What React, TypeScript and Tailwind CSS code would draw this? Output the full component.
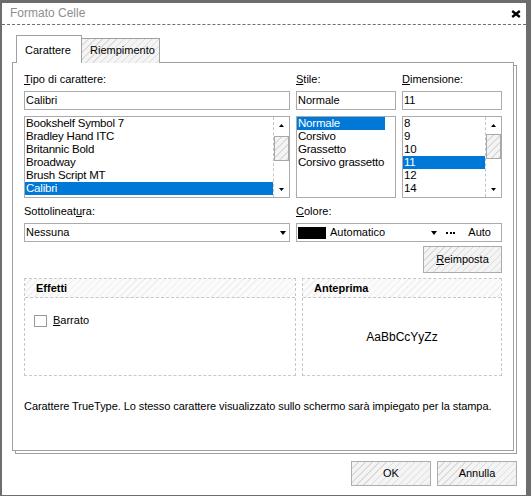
import React from 'react';

const FONTS = ['Bookshelf Symbol 7', 'Bradley Hand ITC', 'Britannic Bold', 'Broadway', 'Brush Script MT', 'Calibri'];
const STYLES = ['Normale', 'Corsivo', 'Grassetto', 'Corsivo grassetto'];
const SIZES = ['8', '9', '10', '11', '12', '14'];

const hatch = 'bg-[image:repeating-linear-gradient(135deg,#f4f4f4_0px,#f4f4f4_4px,#dcdcdc_4px,#dcdcdc_5px)]';
const hatchLight = 'bg-[image:repeating-linear-gradient(135deg,#fbfbfb_0px,#fbfbfb_4px,#efefef_4px,#efefef_5px)]';

function Tri({ down, w = 5, h = 3 }: { down?: boolean; w?: number; h?: number }) {
  return (
    <svg width={w} height={h} viewBox={`0 0 ${w} ${h}`} className="block">
      <polygon points={down ? `0,0 ${w},0 ${w / 2},${h}` : `0,${h} ${w},${h} ${w / 2},0`} fill="#000" />
    </svg>
  );
}

function Scrollbar({ thumbGap }: { thumbGap: string }) {
  return (
    <div className="w-[16px] h-full border-l border-dashed border-[#c4c4c4] flex flex-col">
      <div className="h-[16px] flex items-center justify-center">
        <Tri />
      </div>
      <div className={`${thumbGap} h-[25px] w-[15px] border border-[#a8a8a8] ${hatch}`} />
      <div className="flex-1" />
      <div className="h-[16px] flex items-center justify-center">
        <Tri down />
      </div>
    </div>
  );
}

function ListBox({ items, selected, right }: { items: string[]; selected: number; right: React.ReactNode }) {
  return (
    <div className="h-[82px] border border-[#ababab] flex">
      <div className="flex-1 text-[11.5px] tracking-[-0.2px]">
        {items.map((it, i) => (
          <div
            key={it}
            className={`h-[13px] leading-[13px] pl-[1px] whitespace-nowrap ${i === selected ? 'bg-[#0078d7] text-white' : ''}`}
          >
            {it}
          </div>
        ))}
      </div>
      {right}
    </div>
  );
}

export default function App() {
  return (
    <div className="w-[531px] h-[496px] bg-[#6d6d6d] pt-[3px] pl-[2px] pr-[5px] pb-[1px] font-['Liberation_Sans',Arial,sans-serif] text-[11px] leading-[13px] text-black">
      <div className="h-full bg-white flex flex-col">
        {/* title bar */}
        <div className="h-[22px] shrink-0 border-b border-dashed border-[#6f6f6f] flex items-center justify-between pl-[8px] pr-[5px]">
          <span className="text-[12px] text-[#8e8e8e]">Formato Celle</span>
          <svg width="10" height="8" viewBox="0 0 10 8" className="block">
            <path d="M1.2 1 L8.8 7 M8.8 1 L1.2 7" stroke="#000" strokeWidth="2.3" />
          </svg>
        </div>

        <div className="pl-[10px] pt-[10px]">
          {/* tabs */}
          <div className="flex items-end h-[28px] pl-[4px]">
            <div className="relative z-10 w-[66px] h-[28px] bg-white border border-b-0 border-[#a0a0a0] pl-[8px] pt-[8px]">
              Carattere
            </div>
            <div className={`w-[78px] h-[25px] border border-l-0 border-b-0 border-[#a0a0a0] ${hatch} pl-[8px] pt-[5px]`}>
              Riempimento
            </div>
          </div>

          {/* panel */}
          <div className="-mt-px w-[502px] h-[389px] border border-[#a0a0a0] bg-white shadow-[3px_3px_0_-1px_#fff,3px_3px_0_0_#a0a0a0] px-[11px] pt-[10px]">
            <div className="flex gap-[6px] h-[14px]">
              <div className="w-[266px]">
                <span className="underline">T</span>ipo di carattere:
              </div>
              <div className="w-[100px]">
                <span className="underline">S</span>tile:
              </div>
              <div className="w-[100px]">
                <span className="underline">D</span>imensione:
              </div>
            </div>

            <div className="mt-[4px] flex gap-[6px]">
              <div className="w-[266px] h-[19px] border border-[#ababab] pl-[1px] flex items-center">Calibri</div>
              <div className="w-[100px] h-[19px] border border-[#ababab] pl-[1px] flex items-center">Normale</div>
              <div className="w-[100px] h-[19px] border border-[#ababab] pl-[1px] flex items-center">11</div>
            </div>

            <div className="mt-[6px] flex gap-[6px]">
              <div className="w-[266px]">
                <ListBox items={FONTS} selected={5} right={<Scrollbar thumbGap="mt-[3px]" />} />
              </div>
              <div className="w-[100px]">
                <ListBox items={STYLES} selected={0} right={<div className="w-[10px]" />} />
              </div>
              <div className="w-[100px]">
                <ListBox items={SIZES} selected={3} right={<Scrollbar thumbGap="mt-[1px]" />} />
              </div>
            </div>

            <div className="mt-[7px] flex gap-[6px] h-[14px]">
              <div className="w-[266px]">
                Sottolineat<span className="underline">u</span>ra:
              </div>
              <div className="w-[206px]">
                <span className="underline">C</span>olore:
              </div>
            </div>

            <div className="mt-[4px] flex gap-[6px]">
              <div className="w-[266px] h-[19px] border border-[#ababab] pl-[1px] pr-[3px] flex items-center justify-between">
                <span>Nessuna</span>
                <Tri down w={6} h={4} />
              </div>
              <div className="w-[206px] h-[19px] border border-[#ababab] pl-[1px] pr-[10px] flex items-center">
                <div className="w-[28px] h-[12px] bg-black" />
                <span className="ml-[4px]">Automatico</span>
                <div className="flex-1" />
                <Tri down w={6} h={4} />
                <div className="ml-[9px] flex gap-[1.5px]">
                  <div className="w-[2px] h-[2px] bg-black" />
                  <div className="w-[2px] h-[2px] bg-black" />
                  <div className="w-[2px] h-[2px] bg-black" />
                </div>
                <span className="ml-[13px]">Auto</span>
              </div>
            </div>

            <div className="mt-[4px] flex justify-end">
              <div className={`w-[79px] h-[27px] border border-[#ababab] ${hatch} flex items-center justify-center`}>
                <span>
                  <span className="underline">R</span>eimposta
                </span>
              </div>
            </div>

            <div className="mt-[5px] flex gap-[6px] h-[98px]">
              <div className="w-[272px] border border-dashed border-[#c8c8c8] flex flex-col">
                <div className={`h-[19px] border-b border-dashed border-[#c8c8c8] ${hatchLight} pl-[11px] flex items-center font-bold`}>
                  Effetti
                </div>
                <div className="pt-[16px] pl-[9px] flex items-center">
                  <div className="w-[13px] h-[12px] border border-[#9a9a9a] bg-white" />
                  <span className="ml-[6px]">
                    <span className="underline">B</span>arrato
                  </span>
                </div>
              </div>
              <div className="w-[200px] border border-dashed border-[#c8c8c8] flex flex-col">
                <div className={`h-[19px] border-b border-dashed border-[#c8c8c8] ${hatchLight} pl-[11px] flex items-center font-bold`}>
                  Anteprima
                </div>
                <div className="flex-1 pt-[2px] flex items-center justify-center text-[12px]">AaBbCcYyZz</div>
              </div>
            </div>

            <div className="mt-[24px] whitespace-nowrap tracking-[-0.06px]">
              Carattere TrueType. Lo stesso carattere visualizzato sullo schermo sarà impiegato per la stampa.
            </div>
          </div>
        </div>

        {/* buttons */}
        <div className="mt-[10px] flex justify-end gap-[6px] pr-[9px]">
          <div className={`w-[80px] h-[25px] border border-[#adadad] ${hatch} flex items-center justify-center`}>OK</div>
          <div className={`w-[80px] h-[25px] border border-[#adadad] ${hatch} flex items-center justify-center`}>Annulla</div>
        </div>
      </div>
    </div>
  );
}
